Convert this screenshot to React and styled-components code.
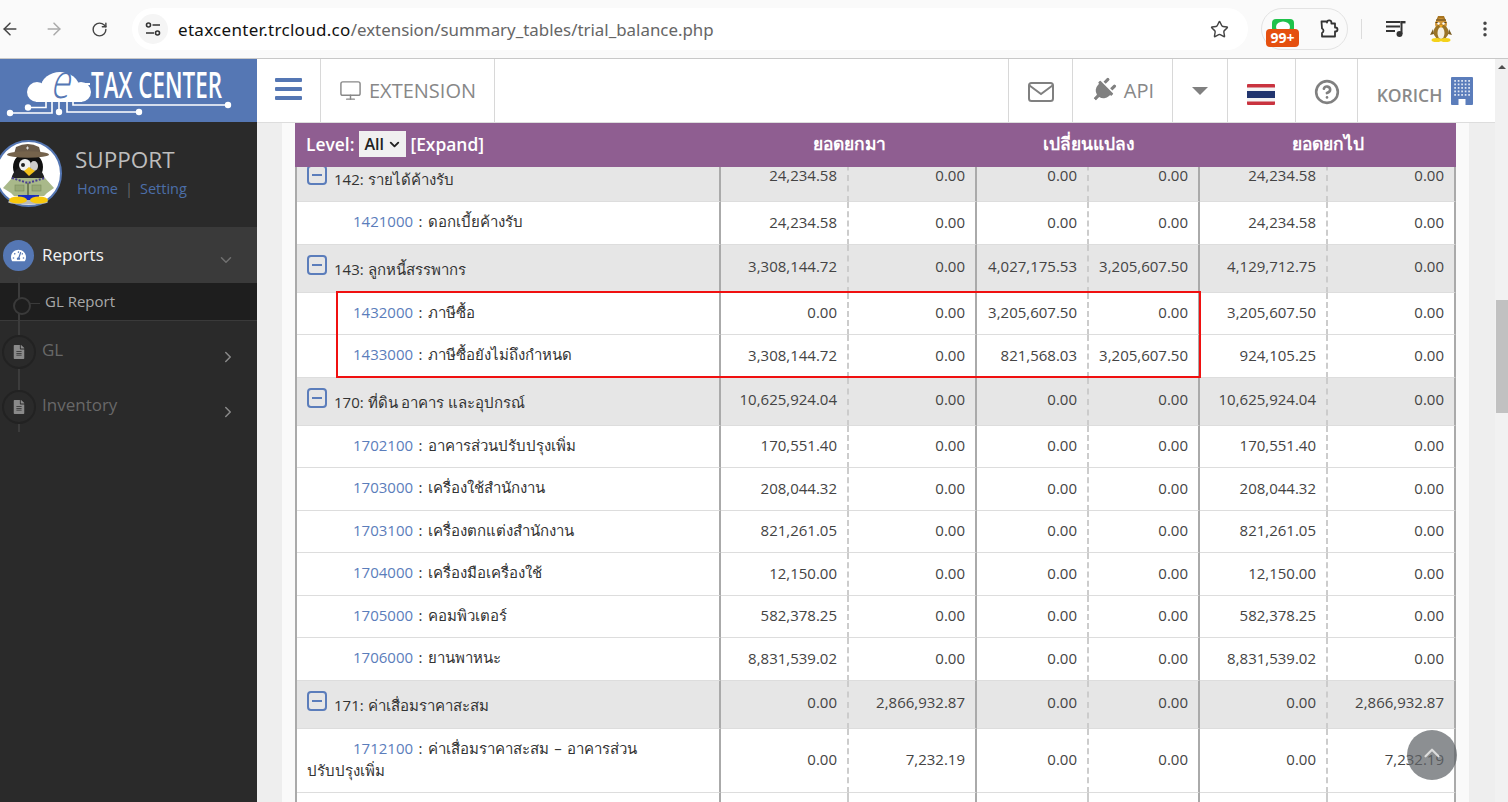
import React from 'react'
import styled, { createGlobalStyle } from 'styled-components'
import { ArrowLeft, ArrowRight, RotateCw, Star, EllipsisVertical, Monitor, CircleHelp, ChevronDown, ChevronRight, ChevronUp } from 'lucide-react'
import { FaPlug, FaFileAlt, FaTachometerAlt } from 'react-icons/fa'

const GlobalStyle = createGlobalStyle`
    html, body {
        margin: 0;
        padding: 0;
        overflow: hidden;
        background: #fff;
        font-family: "Open Sans", "Noto Sans", sans-serif;
    }
    * { box-sizing: border-box; }
`

const rows = [
    { group: true, name: '142: รายได้ค้างรับ', vals: ['24,234.58', '0.00', '0.00', '0.00', '24,234.58', '0.00'] },
    { code: '1421000', name: 'ดอกเบี้ยค้างรับ', vals: ['24,234.58', '0.00', '0.00', '0.00', '24,234.58', '0.00'] },
    { group: true, name: '143: ลูกหนี้สรรพากร', vals: ['3,308,144.72', '0.00', '4,027,175.53', '3,205,607.50', '4,129,712.75', '0.00'] },
    { code: '1432000', name: 'ภาษีซื้อ', vals: ['0.00', '0.00', '3,205,607.50', '0.00', '3,205,607.50', '0.00'] },
    { code: '1433000', name: 'ภาษีซื้อยังไม่ถึงกำหนด', vals: ['3,308,144.72', '0.00', '821,568.03', '3,205,607.50', '924,105.25', '0.00'] },
    { group: true, name: '170: ที่ดิน อาคาร และอุปกรณ์', vals: ['10,625,924.04', '0.00', '0.00', '0.00', '10,625,924.04', '0.00'] },
    { code: '1702100', name: 'อาคารส่วนปรับปรุงเพิ่ม', vals: ['170,551.40', '0.00', '0.00', '0.00', '170,551.40', '0.00'] },
    { code: '1703000', name: 'เครื่องใช้สำนักงาน', vals: ['208,044.32', '0.00', '0.00', '0.00', '208,044.32', '0.00'] },
    { code: '1703100', name: 'เครื่องตกแต่งสำนักงาน', vals: ['821,261.05', '0.00', '0.00', '0.00', '821,261.05', '0.00'] },
    { code: '1704000', name: 'เครื่องมือเครื่องใช้', vals: ['12,150.00', '0.00', '0.00', '0.00', '12,150.00', '0.00'] },
    { code: '1705000', name: 'คอมพิวเตอร์', vals: ['582,378.25', '0.00', '0.00', '0.00', '582,378.25', '0.00'] },
    { code: '1706000', name: 'ยานพาหนะ', vals: ['8,831,539.02', '0.00', '0.00', '0.00', '8,831,539.02', '0.00'] },
    { group: true, name: '171: ค่าเสื่อมราคาสะสม', vals: ['0.00', '2,866,932.87', '0.00', '0.00', '0.00', '2,866,932.87'] },
    { code: '1712100', name: 'ค่าเสื่อมราคาสะสม – อาคารส่วน', wrap: 'ปรับปรุงเพิ่ม', vals: ['0.00', '7,232.19', '0.00', '0.00', '0.00', '7,232.19'] },
    { blank: true, vals: ['', '', '', '', '', ''] },
]

const EtaxLogo = () => (
    <svg width="257" height="77" viewBox="0 -14 257 77">
        <g fill="#fff">
            <ellipse cx="60" cy="28" rx="19" ry="15" />
            <circle cx="37" cy="33" r="10" />
            <circle cx="81" cy="33" r="10" />
            <rect x="36" y="33" width="46" height="10" />
            <rect x="80" y="24" width="10" height="2" />
        </g>
        <text transform="translate(50 39) scale(.72 1) skewX(-18)" fill="#5577b4" fontFamily="'Open Sans', sans-serif" fontWeight="300" fontSize="48">e</text>
        <text transform="translate(91 39) scale(.64 1)" fill="#fff" fontFamily="'Open Sans', sans-serif" fontWeight="600" fontSize="36" textLength="204.700" lengthAdjust="spacingAndGlyphs">TAX CENTER</text>
        <g fill="none" stroke="#fff" strokeWidth="1.600">
            <path d="M10 54H52V43" />
            <path d="M28 48.500H46V43" />
            <path d="M59 53V43" />
            <path d="M67 43V53H139" />
            <path d="M73 43V46H228" />
        </g>
        <g fill="#fff">
            <circle cx="10" cy="54" r="3.200" />
            <circle cx="28" cy="48.500" r="3.200" />
            <circle cx="59" cy="53" r="3.200" />
            <circle cx="139" cy="53" r="3.200" />
            <circle cx="228" cy="46" r="3.200" />
        </g>
    </svg>
)

const Penguin = () => (
    <svg width="67" height="67" viewBox="0 0 67 67">
        <circle cx="33.500" cy="33.500" r="32.500" fill="#fff" stroke="#5577b4" strokeWidth="2" />
        <ellipse cx="33" cy="62" rx="20" ry="2.500" fill="#bbb" />
        <ellipse cx="33" cy="27" rx="15" ry="15" fill="#111" />
        <ellipse cx="33" cy="42" rx="17" ry="17" fill="#222" />
        <ellipse cx="30" cy="25" rx="6" ry="6" fill="#eee" />
        <circle cx="28" cy="25" r="2" fill="#222" />
        <ellipse cx="39" cy="26" rx="4" ry="5" fill="#ccc" />
        <path d="M29 31 L34 27 L40 31 L34 36Z" fill="#f4c21a" />
        <path d="M17 38 L50 38 L59 48 L52 53 L49 56 L19 56 L16 53 L8 48Z" fill="#a9b98a" />
        <path d="M17 38 L33 43 L50 38" fill="none" stroke="#4a3f92" strokeWidth="2" strokeDasharray="2 1.500" />
        <path d="M33 43V55" stroke="#5d6a45" strokeWidth="1.500" />
        <rect x="20" y="45" width="9" height="6" fill="#97a877" stroke="#7a8a5c" strokeWidth=".6" />
        <rect x="37" y="45" width="9" height="6" fill="#97a877" stroke="#7a8a5c" strokeWidth=".6" />
        <rect x="23" y="55" width="21" height="5" fill="#1a2fc0" />
        <ellipse cx="23" cy="60" rx="9" ry="3.600" fill="#f7c80c" />
        <ellipse cx="44" cy="60" rx="9" ry="3.600" fill="#f7c80c" />
        <path d="M21 7 Q33 1 44 7 L46 14 H19Z" fill="#6a5a48" />
        <ellipse cx="33" cy="14.500" rx="21" ry="3.200" fill="#75634c" />
        <path d="M31 8h3M32.500 6.500v3" stroke="#ddd" strokeWidth="1" />
    </svg>
)

const TinyPenguin = () => (
    <svg width="22" height="28" viewBox="0 0 22 28">
        <path d="M6 6 L8 1 L14 1 L16 6Z" fill="#a8741f" />
        <ellipse cx="11" cy="9" rx="6" ry="6" fill="#d09536" />
        <path d="M6 5h10M5.500 7.500h3M13.500 7.500h3" stroke="#54401a" strokeWidth="1" />
        <ellipse cx="11" cy="17" rx="7.500" ry="7.500" fill="#9a7426" />
        <ellipse cx="11" cy="18" rx="3.500" ry="6" fill="#f4f0e4" />
        <path d="M3 14 L0 20 L4 19Z M19 14 L22 20 L18 19Z" fill="#7a5c20" />
        <path d="M9 10 L11 13 L13 10Z" fill="#f2a81d" />
        <circle cx="8.500" cy="8.500" r="1.200" fill="#fff" />
        <circle cx="13.500" cy="8.500" r="1.200" fill="#fff" />
        <ellipse cx="6.500" cy="25" rx="5" ry="2" fill="#f4d21a" />
        <ellipse cx="15.500" cy="25" rx="5" ry="2" fill="#f4d21a" />
    </svg>
)

const App = () => {
    return (
        <Screen>
            <GlobalStyle />
            <BrowserBar>
                <BarButton $gap={0}><ArrowLeft size={20} color="#444" strokeWidth={1.8} /></BarButton>
                <BarButton $gap={24}><ArrowRight size={20} color="#aaa" strokeWidth={1.8} /></BarButton>
                <BarButton $gap={25}><RotateCw size={17} color="#444" strokeWidth={2} /></BarButton>
                <UrlPill>
                    <SiteIcon>
                        <svg width="16" height="14" viewBox="0 0 16 14" fill="none" stroke="#333" strokeWidth="1.600">
                            <circle cx="3.500" cy="3" r="2" />
                            <path d="M7.500 3H15M1 11H9" />
                            <circle cx="12.500" cy="11" r="2" />
                        </svg>
                    </SiteIcon>
                    <UrlText><b>etaxcenter.trcloud.co</b><span>/extension/summary_tables/trial_balance.php</span></UrlText>
                    <Star size={19} color="#444" strokeWidth={1.8} />
                </UrlPill>
                <ExtensionPill>
                    <LineBadge>
                        <LineIcon />
                        <BadgeCount>99+</BadgeCount>
                    </LineBadge>
                    <svg width="20" height="20" viewBox="0 0 20 20" fill="none" stroke="#333" strokeWidth="1.800" strokeLinejoin="round">
                        <path d="M2.500 2.500H8V3.500a2.200 2.200 0 0 1 4.400 0V4.500H16V8.500h.5a2 2 0 0 1 0 4H16V17.500H3V14a2.500 2.500 0 0 0 1.500-2.200A2.500 2.500 0 0 0 3 9.500Z" />
                    </svg>
                </ExtensionPill>
                <BarDivider />
                <svg width="20" height="18" viewBox="0 0 20 18" fill="#333">
                    <rect y="1" width="14" height="2" />
                    <rect y="5.500" width="14" height="2" />
                    <rect y="10" width="9" height="2" />
                    <rect x="14.500" y="1" width="5" height="2.400" />
                    <rect x="14.500" y="1" width="2" height="13" />
                    <circle cx="13.500" cy="14" r="3" />
                </svg>
                <AvatarSlot><TinyPenguin /></AvatarSlot>
                <MenuSlot><EllipsisVertical size={20} color="#444" strokeWidth={2.200} /></MenuSlot>
            </BrowserBar>

            <Workspace>
                <Sidebar>
                    <LogoBox><EtaxLogo /></LogoBox>
                    <Profile>
                        <AvatarCircle><Penguin /></AvatarCircle>
                        <div>
                            <ProfileName>SUPPORT</ProfileName>
                            <ProfileLinks>Home<i>|</i>Setting</ProfileLinks>
                        </div>
                    </Profile>
                    <Menu>
                        <MenuRow $active>
                            <MenuIcon $active><FaTachometerAlt size={15} /></MenuIcon>
                            <MenuLabel $active>Reports</MenuLabel>
                            <MenuChevron $active><ChevronDown size={18} /></MenuChevron>
                        </MenuRow>
                        <SubRow>GL Report</SubRow>
                        <MenuRow>
                            <MenuIcon><FaFileAlt size={14} /></MenuIcon>
                            <MenuLabel>GL</MenuLabel>
                            <MenuChevron><ChevronRight size={18} /></MenuChevron>
                        </MenuRow>
                        <MenuRow>
                            <MenuIcon><FaFileAlt size={14} /></MenuIcon>
                            <MenuLabel>Inventory</MenuLabel>
                            <MenuChevron><ChevronRight size={18} /></MenuChevron>
                        </MenuRow>
                    </Menu>
                </Sidebar>

                <Content>
                    <TopNav>
                        <NavCell $w={64}><Burger><span /><span /><span /></Burger></NavCell>
                        <NavCell $w={174}>
                            <Monitor size={23} color="#888" strokeWidth={1.500} />
                            <NavText>EXTENSION</NavText>
                        </NavCell>
                        <NavSpacer />
                        <NavCell $w={65} $left>
                            <NudgedIcon $down={2}>
                                <svg width="26" height="20" viewBox="0 0 26 20" fill="none" stroke="#808080" strokeWidth="2">
                                    <rect x="1" y="1" width="24" height="18" rx="2.500" />
                                    <path d="M1.500 3.500 L13 12 L24.500 3.500" />
                                </svg>
                            </NudgedIcon>
                        </NavCell>
                        <NavCell $w={100}>
                            <PlugIcon><FaPlug size={25} /></PlugIcon>
                            <NavText>API</NavText>
                        </NavCell>
                        <NavCell $w={55}><Caret /></NavCell>
                        <NavCell $w={68}>
                            <FlagIcon>
                                <svg width="28" height="21" viewBox="0 0 28 21">
                                    <rect width="28" height="21" rx="1" fill="#c9333f" />
                                    <rect y="3.500" width="28" height="14" fill="#f4f4f4" />
                                    <rect y="7" width="28" height="7" fill="#22356f" />
                                </svg>
                            </FlagIcon>
                        </NavCell>
                        <NavCell $w={62}>
                            <NudgedIcon $down={2}><CircleHelp size={26} color="#808080" strokeWidth={2.400} /></NudgedIcon>
                        </NavCell>
                        <NavCell $w={137} $last>
                            <Company>KORICH</Company>
                            <BuildingIcon>
                                <svg width="22" height="28" viewBox="0 0 22 28">
                                    <rect width="22" height="28" rx="1" fill="#5b7dbb" />
                                    {[3, 6.5, 10, 13.5, 17].map(y => [4, 7.5, 11, 14.5, 18].map(x => (
                                        <rect key={`${x}-${y}`} x={x - 0.75} y={y} width="1.700" height="1.800" fill="#dfe6f3" />
                                    )))}
                                    <rect x="7.500" y="22" width="7" height="6" fill="#fff" />
                                </svg>
                            </BuildingIcon>
                        </NavCell>
                    </TopNav>

                    <Gutter>
                        <Card>
                            <HeadRow>
                                <LevelCell>
                                    Level:
                                    <LevelSelect>All<ChevronDown size={15} strokeWidth={3} /></LevelSelect>
                                    [Expand]
                                </LevelCell>
                                <HeadTitle>ยอดยกมา</HeadTitle>
                                <HeadTitle>เปลี่ยนแปลง</HeadTitle>
                                <HeadTitle>ยอดยกไป</HeadTitle>
                            </HeadRow>
                            <TableViewport>
                                <TableBody>
                                    {rows.map((row, i) => (
                                        <Row key={i} $group={row.group} $tall={!!row.wrap} $blank={row.blank}>
                                            <AccountCell>
                                                {row.group && (
                                                    <GroupLine>
                                                        <Collapse />
                                                        <span>{row.name}</span>
                                                    </GroupLine>
                                                )}
                                                {row.code && (
                                                    <ChildLine>
                                                        <Code>{row.code}</Code> : {row.name}
                                                        {row.wrap && <><br />{row.wrap}</>}
                                                    </ChildLine>
                                                )}
                                            </AccountCell>
                                            {row.vals.map((val, j) => (
                                                <Num key={j} $dashed={j % 2 === 0} $group={row.group}>{val}</Num>
                                            ))}
                                        </Row>
                                    ))}
                                </TableBody>
                                <Highlight />
                            </TableViewport>
                        </Card>
                    </Gutter>
                    <ScrollTop><ChevronUp size={26} strokeWidth={2} /></ScrollTop>
                </Content>

                <FakeScrollbar>
                    <ScrollArrow />
                    <ScrollThumb />
                </FakeScrollbar>
            </Workspace>
        </Screen>
    )
}

export default App

const LineIcon = () => (
    <svg width="22" height="16" viewBox="0 0 22 16">
        <rect width="22" height="16" rx="4" fill="#1fc24b" />
        <ellipse cx="11" cy="8" rx="7" ry="5.500" fill="#fff" />
    </svg>
)

const Screen = styled.div`
    width: 1508px;
    height: 802px;
    overflow: hidden;
    display: flex;
    flex-direction: column;
`

const BrowserBar = styled.div`
    height: 59px;
    flex: none;
    display: flex;
    align-items: center;
    background: #fafafa;
    border-bottom: 1px solid #c8c8c8;
`

const BarButton = styled.div`
    width: 20px;
    margin-left: ${p => p.$gap}px;
    display: flex;
    justify-content: center;
`

const UrlPill = styled.div`
    width: 1116px;
    height: 42px;
    margin-left: 23px;
    padding: 0 19px 0 6px;
    border-radius: 21px;
    background: #fff;
    display: flex;
    align-items: center;
`

const SiteIcon = styled.div`
    width: 30px;
    height: 30px;
    border-radius: 50%;
    background: #f5f5f5;
    display: flex;
    align-items: center;
    justify-content: center;
`

const UrlText = styled.div`
    flex: 1;
    margin-left: 10px;
    font-family: "Noto Sans", sans-serif;
    font-size: 17px;
    color: #111;
    b {
        font-weight: 400;
        letter-spacing: 0.3px;
    }
    span {
        color: #666;
        font-size: 16.9px;
    }
`

const ExtensionPill = styled.div`
    width: 87px;
    height: 42px;
    margin-left: 13px;
    border: 1px solid #e3e3e3;
    border-radius: 21px;
    display: flex;
    align-items: center;
    position: relative;
    padding-left: 57px;
`

const LineBadge = styled.div`
    position: absolute;
    left: 4px;
    top: 10px;
    width: 33px;
    height: 30px;
    display: flex;
    justify-content: center;
`

const BadgeCount = styled.div`
    position: absolute;
    left: 0;
    top: 10px;
    width: 33px;
    height: 18px;
    border-radius: 4px;
    background: #e5500f;
    color: #fff;
    font-family: "Open Sans", sans-serif;
    font-weight: 700;
    font-size: 14px;
    line-height: 18px;
    text-align: center;
`

const BarDivider = styled.div`
    width: 1px;
    height: 20px;
    margin: 0 24px 0 13px;
    background: #dcdcdc;
`

const AvatarSlot = styled.div`
    margin-left: 24px;
    width: 22px;
    display: flex;
`

const MenuSlot = styled.div`
    margin-left: 23px;
    width: 20px;
    display: flex;
`

const Workspace = styled.div`
    flex: 1;
    display: flex;
    min-height: 0;
`

const Sidebar = styled.aside`
    width: 257px;
    flex: none;
    background: #2a2a2a;
`

const LogoBox = styled.div`
    height: 63px;
    background: #5577b4;
    display: flex;
    align-items: flex-start;
    svg {
        flex: none;
        margin-top: -14px;
    }
`

const Profile = styled.div`
    height: 105px;
    padding-top: 18px;
    display: flex;
    gap: 13px;
`

const AvatarCircle = styled.div`
    width: 67px;
    height: 67px;
    margin-left: -5px;
    flex: none;
`

const ProfileName = styled.div`
    margin-top: 5px;
    font-size: 22.5px;
    line-height: 30px;
    color: #bdbdbd;
`

const ProfileLinks = styled.div`
    margin: 4px 0 0 2px;
    font-size: 14.5px;
    line-height: 20px;
    color: #4c6ea8;
    i {
        font-style: normal;
        margin: 0 7px;
        color: #666;
    }
`

const Menu = styled.nav`
    position: relative;
    &::before {
        content: '';
        position: absolute;
        left: 18px;
        top: 50px;
        width: 2px;
        height: 155px;
        background: #3c3c3c;
        z-index: 2;
    }
`

const MenuRow = styled.div`
    position: relative;
    height: ${p => (p.$active ? 56 : 55)}px;
    background: ${p => (p.$active ? '#3a3a3a' : 'transparent')};
    display: flex;
    align-items: center;
`

const MenuIcon = styled.div`
    position: relative;
    z-index: 3;
    width: ${p => (p.$active ? 31 : 34)}px;
    height: ${p => (p.$active ? 31 : 34)}px;
    margin-left: ${p => (p.$active ? 3 : 2)}px;
    margin-right: ${p => (p.$active ? 8 : 6)}px;
    border-radius: 50%;
    background: ${p => (p.$active ? '#5577b4' : '#2a2a2a')};
    border: ${p => (p.$active ? 'none' : '2px solid #222')};
    color: ${p => (p.$active ? '#fff' : '#8a8a8a')};
    display: flex;
    align-items: center;
    justify-content: center;
`

const MenuLabel = styled.div`
    flex: 1;
    margin-top: ${p => (p.$active ? -2 : -4)}px;
    font-size: 17px;
    color: ${p => (p.$active ? '#f2f2f2' : '#686868')};
`

const MenuChevron = styled.div`
    display: flex;
    margin-right: ${p => (p.$active ? 22 : 20)}px;
    margin-top: 10px;
    color: ${p => (p.$active ? '#707070' : '#8a8a8a')};
`

const SubRow = styled.div`
    position: relative;
    height: 38px;
    margin-bottom: 3px;
    padding-left: 45px;
    background: #1e1e1e;
    border-bottom: 1px solid #3a3a3a;
    font-size: 15px;
    line-height: 37px;
    color: #a8a8a8;
    &::before {
        content: '';
        position: absolute;
        z-index: 3;
        left: 13px;
        top: 14px;
        width: 14px;
        height: 14px;
        border-radius: 50%;
        background: #1e1e1e;
        border: 2px solid #3a3a3a;
    }
    &::after {
        content: '';
        position: absolute;
        left: 27px;
        top: 20px;
        width: 13px;
        height: 1px;
        background: #3a3a3a;
    }
`

const Content = styled.div`
    position: relative;
    flex: 1;
    min-width: 0;
    display: flex;
    flex-direction: column;
    background: #eee;
`

const TopNav = styled.header`
    height: 64px;
    flex: none;
    display: flex;
    background: #fff;
    border-bottom: 1px solid #ddd;
`

const NavCell = styled.div`
    width: ${p => p.$w}px;
    flex: none;
    display: flex;
    align-items: center;
    justify-content: center;
    gap: 7px;
    border-right: ${p => (p.$last ? 'none' : '1px solid #d8d8d8')};
    border-left: ${p => (p.$left ? '1px solid #d8d8d8' : 'none')};
`

const NudgedIcon = styled.div`
    display: flex;
    margin-top: ${p => p.$down}px;
`

const FlagIcon = styled.div`
    display: flex;
    margin: 7px 2px 0 0;
`

const BuildingIcon = styled.div`
    display: flex;
    margin-right: 3px;
`

const NavSpacer = styled.div`
    flex: 1;
`

const NavText = styled.span`
    font-size: 20px;
    color: #888;
`

const Company = styled.span`
    font-size: 17.5px;
    font-weight: 600;
    color: #8a8a8a;
    margin-top: 8px;
    margin-right: 2px;
`

const PlugIcon = styled.div`
    display: flex;
    color: #808080;
    margin-right: 1px;
    transform: rotate(45deg);
`

const Burger = styled.div`
    width: 27px;
    display: flex;
    flex-direction: column;
    gap: 5px;
    margin: -4px 0 0 -1px;
    span {
        height: 4px;
        border-radius: 1px;
        background: #5577b4;
    }
`

const Caret = styled.div`
    width: 0;
    height: 0;
    border-left: 8px solid transparent;
    border-right: 8px solid transparent;
    border-top: 8px solid #808080;
`

const Gutter = styled.main`
    flex: 1;
    min-height: 0;
    padding: 0 26px 0 25px;
`

const Card = styled.div`
    height: 100%;
    padding: 0 13px;
    background: #fafafa;
    display: flex;
    flex-direction: column;
`

const columns = '424px 128px 128px 112px 111px 128px 128px'

const HeadRow = styled.div`
    position: relative;
    z-index: 2;
    height: 44px;
    flex: none;
    display: grid;
    grid-template-columns: ${columns};
    border-left: 2px solid #8f5e91;
    background: #8f5e91;
    color: #fff;
    font-weight: 600;
    font-size: 17.4px;
    align-items: center;
    padding-bottom: 3px;
`

const LevelCell = styled.div`
    padding-left: 9px;
    display: flex;
    align-items: center;
`

const LevelSelect = styled.div`
    width: 47px;
    height: 26px;
    margin: 1px 4px 0 5px;
    padding-left: 5px;
    background: #f0f0f0;
    color: #222;
    font-size: 16px;
    font-weight: 600;
    display: flex;
    align-items: center;
    gap: 3px;
`

const HeadTitle = styled.div`
    grid-column: span 2;
    text-align: center;
`

const TableViewport = styled.div`
    position: relative;
    flex: 1;
    min-height: 0;
`

const TableBody = styled.div`
    margin-top: -13px;
`

const Row = styled.div`
    display: grid;
    grid-template-columns: ${columns};
    height: ${p => (p.$tall ? 64 : p.$group ? 48 : p.$blank ? 10 : 42.5)}px;
    border-left: 2px solid #aaa;
    background: ${p => (p.$group ? '#e6e6e6' : '#fff')};
    color: #333;
    font-size: 15px;
`

const AccountCell = styled.div`
    display: flex;
    align-items: center;
    padding-left: 10px;
    line-height: 22px;
    border-right: 2px solid #aaa;
    border-bottom: 1px solid #ddd;
`

const GroupLine = styled.div`
    display: flex;
    align-items: flex-start;
    gap: 7px;
    margin-top: -1px;
    span { margin-top: 3px; }
`

const ChildLine = styled.div`
    text-indent: 46px;
    word-spacing: 1.5px;
    margin-bottom: 3px;
`

const Collapse = styled.div`
    position: relative;
    width: 20px;
    height: 20px;
    border: 2px solid #5b7dbb;
    border-radius: 4px;
    &::after {
        content: '';
        position: absolute;
        left: 3px;
        right: 3px;
        top: 7px;
        height: 2px;
        background: #5b7dbb;
    }
`

const Code = styled.span`
    color: #5b7dbb;
`

const Num = styled.div`
    display: flex;
    align-items: center;
    justify-content: flex-end;
    padding: 0 10px ${p => (p.$group ? 5 : 2)}px 0;
    line-height: 16px;
    color: #444;
    border-bottom: 1px solid #ddd;
    border-right: 2px ${p => (p.$dashed ? 'dashed #ccc' : 'solid #aaa')};
`

const Highlight = styled.div`
    position: absolute;
    left: 41px;
    top: 124px;
    width: 865px;
    height: 87px;
    border: 2px solid #f01010;
    pointer-events: none;
`

const ScrollTop = styled.div`
    position: absolute;
    right: 38px;
    bottom: 22px;
    width: 50px;
    height: 50px;
    border-radius: 50%;
    background: rgba(95, 100, 104, 0.72);
    color: #ddd;
    display: flex;
    align-items: center;
    justify-content: center;
    padding-bottom: 5px;
`

const FakeScrollbar = styled.div`
    position: relative;
    width: 13px;
    flex: none;
    background: #f1f1f1;
`

const ScrollArrow = styled.div`
    width: 0;
    height: 0;
    margin: 6px auto 0;
    border-left: 4px solid transparent;
    border-right: 4px solid transparent;
    border-bottom: 4px solid #505050;
`

const ScrollThumb = styled.div`
    position: absolute;
    top: 241px;
    left: 1px;
    right: 0;
    height: 113px;
    background: #c1c1c1;
`
